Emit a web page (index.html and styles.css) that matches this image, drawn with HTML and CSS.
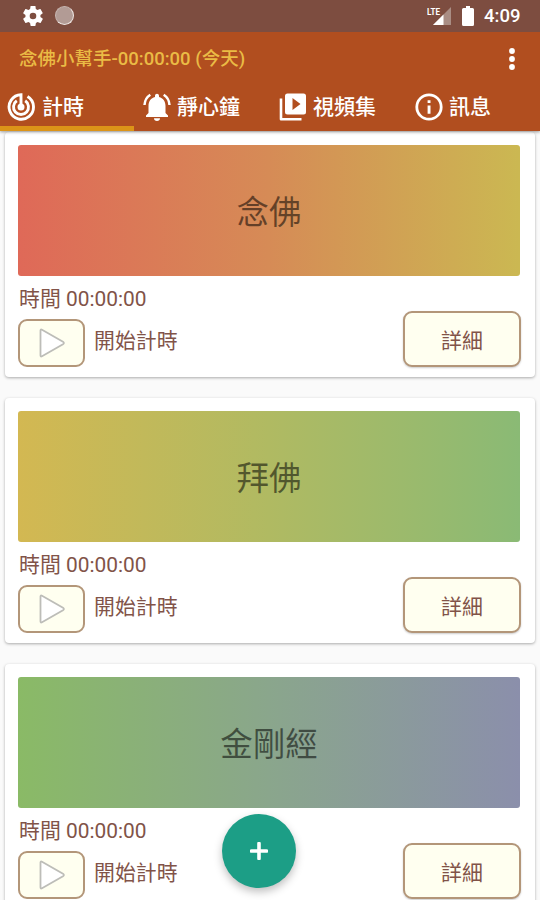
FILE: index.html
```html
<!DOCTYPE html>
<html lang="zh-Hant">
<head>
<meta charset="utf-8">
<title>念佛小幫手</title>
<link rel="stylesheet" href="styles.css">
</head>
<body>
<div class="screen">
  <header class="header">
    <div class="status">
      <div class="status-left">
        <svg class="gear" viewBox="2 2 20 20"><path fill="#fff" fill-rule="evenodd" d="M19.4 13a7.5 7.5 0 0 0 0-2l2.1-1.6c.2-.2.2-.4.1-.6l-2-3.5c-.1-.2-.4-.3-.6-.2l-2.5 1a7 7 0 0 0-1.7-1L14.500 2.400c0-.2-.2-.4-.5-.4h-4c-.3 0-.5.2-.5.400l-.4 2.700a7 7 0 0 0-1.700 1l-2.500-1c-.2-.1-.5 0-.6.2l-2 3.500c-.1.2-.1.500.1.600L4.500 11a8 8 0 0 0 0 2l-2.100 1.600c-.2.2-.2.400-.1.600l2 3.500c.1.2.4.3.6.2l2.500-1a7 7 0 0 0 1.700 1l.4 2.700c0 .2.2.4.5.4h4c.3 0 .5-.2.500-.4l.4-2.700a7 7 0 0 0 1.700-1l2.500 1c.2.1.5 0 .6-.2l2-3.500c.1-.2.1-.5-.1-.600zM12 15.300a3.300 3.300 0 1 1 0-6.600 3.300 3.300 0 0 1 0 6.600z"/></svg>
        <span class="dot"></span>
      </div>
      <div class="status-right">
        <svg class="signal" viewBox="0 0 25 20"><path fill="#a98d84" d="M24 1v18H6z"/><path fill="#fff" d="M16.500 8.500V19H6z"/><text x="0" y="8.500" class="lte" textLength="13" lengthAdjust="spacingAndGlyphs">LTE</text></svg>
        <svg class="battery" viewBox="0 0 12 20"><path fill="#fff" d="M4 0h4v2h2.500q1.500 0 1.500 1.500v15q0 1.500-1.500 1.500h-9Q0 20 0 18.500v-15Q0 2 1.500 2H4z"/></svg>
        <span class="clock">4:09</span>
      </div>
    </div>
    <div class="titlebar">
      <h1 class="title">念佛小幫手-00:00:00 (今天)</h1>
      <svg class="more" viewBox="0 0 6 22"><g fill="#fff"><circle cx="3" cy="3" r="2.900"/><circle cx="3" cy="11" r="2.900"/><circle cx="3" cy="19" r="2.900"/></g></svg>
    </div>
    <nav class="tabs">
      <div class="tab tab-active">
        <svg class="tab-icon" viewBox="0 0 28 28"><g fill="none" stroke="#fff" stroke-width="2.900"><path d="M20.500 3.500A12.200 12.200 0 1 1 14 1.800V13"/><path d="M18.200 7.800A7.500 7.500 0 1 1 9.800 7.800"/></g><circle cx="14" cy="14" r="3.500" fill="#fff"/></svg>
        <span>計時</span>
      </div>
      <div class="tab">
        <svg class="tab-icon" viewBox="0 0 28 28"><path fill="#fff" d="M14 28c1.800 0 3-1.100 3-2.800h-6c0 1.700 1.200 2.800 3 2.800zM22.500 20v-7c0-4.700-2.500-8-6.500-9V3c0-1.400-.9-2.300-2-2.300S12 1.600 12 3v1c-4 1-6.500 4.300-6.500 9v7L3 22.500V24h22v-1.500z"/><g fill="none" stroke="#fff" stroke-width="2.500"><path d="M7.300 1.800C3.800 4 1.800 7 1.500 12M20.700 1.800c3.500 2.200 5.500 5.200 5.800 10.200"/></g></svg>
        <span>靜心鐘</span>
      </div>
      <div class="tab">
        <svg class="tab-icon" viewBox="0 0 28 28"><path fill="none" stroke="#fff" stroke-width="2.600" stroke-linejoin="round" d="M2 5.500v20.700h20.500"/><path fill="#fff" fill-rule="evenodd" d="M8.500.5h16Q27 .5 27 3v16q0 2.500-2.500 2.500h-16Q6 21.500 6 19V3Q6 .5 8.500.5zM13.500 5v12l8-6z"/></svg>
        <span>視頻集</span>
      </div>
      <div class="tab">
        <svg class="tab-icon" viewBox="0 0 28 28"><circle cx="14" cy="14" r="12.200" fill="none" stroke="#fff" stroke-width="2.800"/><path fill="#fff" d="M12.600 7.200h2.900v2.800h-2.900zM12.600 12.500h2.900v8.200h-2.900z"/></svg>
        <span>訊息</span>
      </div>
    </nav>
  </header>
  <main class="list">
    <section class="card">
      <div class="banner banner-red">念佛</div>
      <div class="time">時間 00:00:00</div>
      <div class="actions">
        <button class="play"><svg class="play-icon" viewBox="0 0 26 30"><path d="M1.500 2.500v25q0 1.500 1.500.7l21-12q1.800-1.200 0-2.400L3 1.800q-1.500-.8-1.500.7z"/></svg></button>
        <span class="start">開始計時</span>
        <button class="detail">詳細</button>
      </div>
    </section>
    <section class="card">
      <div class="banner banner-yellow">拜佛</div>
      <div class="time">時間 00:00:00</div>
      <div class="actions">
        <button class="play"><svg class="play-icon" viewBox="0 0 26 30"><path d="M1.500 2.500v25q0 1.500 1.500.7l21-12q1.800-1.200 0-2.400L3 1.800q-1.500-.8-1.500.7z"/></svg></button>
        <span class="start">開始計時</span>
        <button class="detail">詳細</button>
      </div>
    </section>
    <section class="card">
      <div class="banner banner-green">金剛經</div>
      <div class="time">時間 00:00:00</div>
      <div class="actions">
        <button class="play"><svg class="play-icon" viewBox="0 0 26 30"><path d="M1.500 2.500v25q0 1.500 1.500.7l21-12q1.800-1.200 0-2.400L3 1.800q-1.500-.8-1.500.7z"/></svg></button>
        <span class="start">開始計時</span>
        <button class="detail">詳細</button>
      </div>
    </section>
  </main>
  <button class="fab"><svg class="plus" viewBox="0 0 18 18"><path d="M9 1.500v15M1.500 9h15"/></svg></button>
</div>
</body>
</html>
```
FILE: styles.css
```css
* { box-sizing: border-box; }
body {
  margin: 0;
  font-family: Roboto, "Noto Sans CJK TC", sans-serif;
}
.screen {
  position: relative;
  display: flex;
  flex-direction: column;
  width: 540px;
  height: 900px;
  overflow: hidden;
  background: #fafafa;
}
.header {
  position: relative;
  z-index: 1;
  flex: none;
  height: 131px;
  background: #b14e1f;
  box-shadow: 0 1px 3px rgba(0, 0, 0, .4);
}
.status {
  display: flex;
  justify-content: space-between;
  height: 32px;
  padding: 0 20px 0 23px;
  background: #7d4d40;
}
.status-left, .status-right { display: flex; align-items: center; }
.status-left { gap: 12px; padding-bottom: 1px; }
.gear { width: 20px; height: 20px; }
.dot {
  width: 19px;
  height: 19px;
  border-radius: 50%;
  background: #b29b95;
  border: 1px solid #c6b5b0;
  border-right-color: #eee6e3;
  border-bottom-color: #eee6e3;
}
.signal { width: 25px; height: 20px; margin-right: 10px; }
.lte { font: 700 9px Roboto, sans-serif; fill: #fff; }
.battery { width: 12px; height: 20px; margin-right: 10px; }
.clock {
  width: 36px;
  color: #fff;
  font-size: 18.500px;
  font-weight: 500;
  line-height: 32px;
  white-space: nowrap;
}
.titlebar {
  display: flex;
  align-items: center;
  justify-content: space-between;
  height: 53px;
  padding: 0 25px 0 19px;
}
.title {
  margin: 0;
  color: #eabb45;
  font-size: 18.500px;
  font-weight: 500;
  line-height: 28px;
  white-space: nowrap;
}
.more { width: 6px; height: 22px; }
.tabs {
  display: grid;
  grid-template-columns: 134px 136px 136px 134px;
  height: 46px;
}
.tab {
  display: flex;
  align-items: center;
  gap: 6px;
  padding: 3px 0 0 9px;
  color: #fff;
  font-size: 21px;
  font-weight: 500;
  line-height: 30px;
  border-bottom: 5px solid transparent;
  white-space: nowrap;
}
.tab-active { padding-left: 7px; gap: 7px; border-bottom-color: #dc9418; }
.tab-icon { flex: none; width: 28px; height: 28px; }
.list {
  display: flex;
  flex-direction: column;
  gap: 20.700px;
  padding: 1.300px 5px 0;
}
.card {
  flex: none;
  height: 245px;
  padding: 13px;
  background: #fff;
  border-radius: 4px;
  box-shadow: 0 1px 3px rgba(0, 0, 0, .32);
}
.banner {
  height: 131px;
  margin: 0 2px 0 0;
  padding-top: 3px;
  border-radius: 3px;
  color: rgba(0, 0, 0, .53);
  font-size: 32.500px;
  line-height: 131px;
  text-align: center;
}
.banner-red { background: linear-gradient(90deg, #df6958, #d68b56 50%, #cbb852); }
.banner-yellow { background: linear-gradient(90deg, #d3b852, #b0ba62 50%, #8aba75); }
.banner-green { background: linear-gradient(90deg, #8aba66, #8aa68c 50%, #8b8fab); }
.time {
  height: 35px;
  padding: 7px 0 0 1px;
  color: #815348;
  font-size: 20.900px;
  line-height: 33px;
}
.actions {
  display: flex;
  align-items: flex-end;
  height: 56px;
  padding-right: 1px;
}
.play, .detail {
  display: flex;
  align-items: center;
  justify-content: center;
  padding: 0;
  border: 2px solid #b39679;
  border-radius: 9px;
  background: #fffff0;
}
.play { width: 67px; height: 48px; }
.play-icon { width: 26px; height: 30px; }
.play-icon path { fill: #fff; stroke: #bdbdb8; stroke-width: 1.800; }
.start {
  align-self: center;
  margin-left: 9px;
  padding-top: 4px;
  color: #815348;
  font-size: 20.900px;
  line-height: 32px;
}
.detail {
  width: 118px;
  height: 56px;
  margin-left: auto;
  color: #815348;
  font-family: inherit;
  font-size: 20.900px;
  box-shadow: 0 1px 2px rgba(0, 0, 0, .2);
}
.fab {
  position: absolute;
  z-index: 2;
  left: 222px;
  top: 814px;
  display: flex;
  align-items: center;
  justify-content: center;
  width: 74px;
  height: 74px;
  padding: 0;
  border: 0;
  border-radius: 50%;
  background: #1c9e86;
  box-shadow: 0 4px 8px rgba(0, 0, 0, .25);
}
.plus { width: 18px; height: 18px; }
.plus path { stroke: #fff; stroke-width: 3.600; stroke-linecap: round; }
```
